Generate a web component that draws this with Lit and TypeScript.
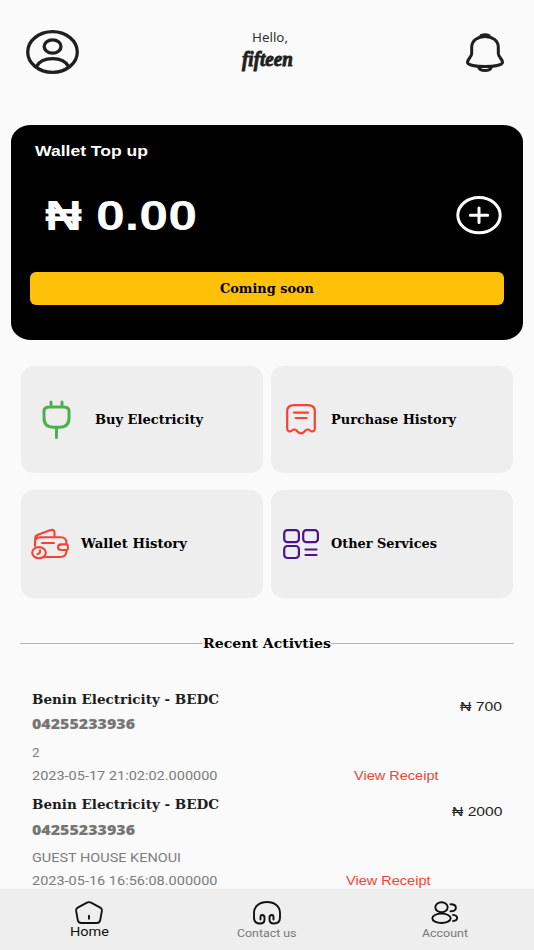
import { LitElement, html, svg, css } from "lit";
import { customElement, property } from "lit/decorators.js";

/** One line of text fitted to a given width; the baseline sits 5px above the bottom of the line box. */
@customElement("fit-text")
class FitText extends LitElement {
  @property() text = "";
  @property({ type: Number }) w = 0;
  @property({ type: Number }) h = 20;
  static styles = css`
    :host { display: block; flex: none; }
    svg { display: block; overflow: visible; }
    text { fill: currentColor; white-space: pre; }
  `;
  render() {
    return html`<svg width=${this.w} height=${this.h}>
      <text x="0" y=${this.h - 5} textLength=${this.w} lengthAdjust="spacingAndGlyphs">${this.text}</text>
    </svg>`;
  }
}

const icons = {
  avatar: svg`<ellipse cx="26.5" cy="22" rx="24.8" ry="20.3"/><ellipse cx="26.6" cy="16.5" rx="8.4" ry="6.7"/><path d="M10.5 36.5C13 31.5 19 28.6 26.5 28.6S40 31.5 42.5 36.5"/>`,
  bell: svg`<path d="M19 3.400C11.500 3.400 5.700 8 5.700 14v6.500c0 3.400-4.200 5.500-4.200 8.700 0 5.700 35 5.700 35 0 0-3.200-4.200-5.300-4.200-8.700V14C32.300 8 26.500 3.400 19 3.400z"/><path d="M15 2.600Q19 .8 23 2.600M12.700 34.200c1.500 4.400 11.100 4.400 12.600 0"/>`,
  plus: svg`<ellipse cx="23" cy="19.2" rx="21.2" ry="17.6"/><path d="M14.300 19.200h17.400M23 12v14.600"/>`,
  plug: svg`<path d="M6.500 7h14q5.500 0 5.500 4v7q0 9.200-9.500 9.200h-6Q1 27.200 1 18v-7q0-4 5.500-4zM8 7V2M19 7V2M13.500 27.200V37.500"/>`,
  receipt: svg`<path d="M1.200 24.500V7q0-5.800 7-5.800h13.600q7 0 7 5.800v17.500c0 3-2.600 3.800-4.800 2-1.800-1.600-3.500-1.200-5 .5-2.500 3.100-5.500 3.100-8 0-1.500-1.700-3.200-2.100-5-.5-2.200 1.800-4.800 1-4.800-2zM8 8.700h14M9.700 14h11"/>`,
  wallet: svg`<path d="M4 18V14q0-4.700 5.500-4.700h20q6 0 6 5.500v1.600h-5q-3.500 0-3.500 2.800t3.500 2.800h5v1q0 6-6.500 6H13M4.200 14.500v-4q0-3 3.300-4L19 2.200q4.500-1.300 4.500 2.500v4.300M11 15h12M35.500 16.400q1.300 0 1.300 1.500v2.600q0 1.500-1.300 1.500"/><ellipse cx="8" cy="24.700" rx="6.800" ry="5.600"/><path d="M9 22.300v1.700q0 .8-.8 1.200l-1.700.9"/>`,
  grid: svg`<rect x="1.200" y="1.200" width="14.700" height="12" rx="3.200"/><rect x="20.200" y="1.200" width="14.700" height="12" rx="3.200"/><rect x="1.200" y="17" width="14.700" height="12" rx="3.200"/><path d="M22.500 20.500h11M22.500 26h11"/>`,
  home: svg`<path d="M12 1.600 2.700 6.600Q.8 7.700 1.100 9.900l1.700 9.200q.5 2.900 3.400 2.900h15.600q2.900 0 3.400-2.900l1.700-9.200Q27.200 7.700 25.300 6.600L16 1.600Q14 .6 12 1.600zM14 14.800v3"/>`,
  headset: svg`<path d="M7.500 18.500v-2.300q0-2.200 1.600-2.200 2.400 0 2.400 2.800v1.700q0 4-4.300 4Q1 22.500 1 16.500V12C1 5.500 6.500 1 14 1s13 4.500 13 11v4.500q0 6-6.200 6-4.300 0-4.300-4v-1.700q0-2.800 2.400-2.800 1.600 0 1.600 2.200v2.300"/>`,
  people: svg`<ellipse cx="10.500" cy="6.200" rx="6.200" ry="5"/><ellipse cx="10.500" cy="17.300" rx="9.200" ry="4.700"/><path d="M19.500 3.300c7.200 0 7.200 7 0 7M22 13.900c5.500.8 5.500 5.400 0 6.200"/>`,
};

const icon = (name: keyof typeof icons, w: number, h: number, sw: number) => html`
  <svg class="icon" width=${w} height=${h} viewBox="0 0 ${w} ${h}" stroke-width=${sw}>${icons[name]}</svg>`;

const tiles = [
  { name: "plug", w: 28, h: 39, sw: 3, label: "Buy Electricity", tw: 108, cls: "plug" },
  { name: "receipt", w: 30, h: 30, sw: 2.2, label: "Purchase History", tw: 125, cls: "receipt" },
  { name: "wallet", w: 38, h: 31, sw: 2.1, label: "Wallet History", tw: 106, cls: "wallet" },
  { name: "grid", w: 36, h: 30, sw: 2.2, label: "Other Services", tw: 106, cls: "grid4" },
] as const;

const rows = [
  { note: "2", nw: 7.5, date: "2023-05-17 21:02:02.000000", amount: "₦ 700", aw: 42, right: 32.5, link: 96 },
  { note: "GUEST HOUSE KENOUI", nw: 149, date: "2023-05-16 16:56:08.000000", amount: "₦ 2000", aw: 50.5, right: 31.5, link: 104 },
];

const tabs = [
  { name: "home", w: 28, h: 23, label: "Home", tw: 39, cls: "tab on" },
  { name: "headset", w: 28, h: 23, label: "Contact us", tw: 59.5, cls: "tab" },
  { name: "people", w: 28, h: 23, label: "Account", tw: 46, cls: "tab" },
] as const;

@customElement("app-root")
class AppRoot extends LitElement {
  static styles = css`
    :host { display: flex; flex-direction: column; height: 950px; overflow: hidden; background: #fafafa; color: #000; font: 13.5px Roboto, sans-serif; box-sizing: border-box; }
    * { box-sizing: border-box; }
    .icon { display: block; flex: none; overflow: visible; fill: none; stroke: currentColor; stroke-linecap: round; stroke-linejoin: round; }
    header { height: 125px; flex: none; display: flex; justify-content: space-between; padding: 29.5px 30.5px 0 26px; color: #1f1f1f; }
    header .icon:last-child { margin-top: 3.5px; }
    .greet { display: flex; flex-direction: column; align-items: center; margin-left: -9px; }
    .hello { font: 12.5px "Noto Sans", sans-serif; color: #333; margin-left: 5px; }
    .name { font: italic 700 20.5px "Liberation Serif", serif; margin-top: 4.5px; stroke: currentColor; stroke-width: 0.9px; }
    .slab { font-family: "DejaVu Serif", serif; font-weight: 700; font-size: 12.8px; }
    .card { flex: none; height: 215px; margin: 0 10.8px 0 10.6px; border-radius: 20px / 17px; background: #000; color: #fff; padding: 15.5px 19.2px 0 19.4px; }
    .title { font: 700 15px "Liberation Sans", sans-serif; margin-left: 5px; }
    .money { display: flex; align-items: flex-start; margin-top: 35.5px; padding: 0 2.3px 0 14.8px; height: 76.2px; }
    .money .icon { margin-left: auto; }
    .sum { font: 700 43px "Liberation Sans", sans-serif; margin-top: 4px; }
    .digits { margin-left: 14px; }
    .button { height: 32.5px; border-radius: 6px; background: #ffc107; color: #000; display: flex; justify-content: center; padding-top: 5.5px; }
    .tiles { flex: none; display: grid; grid-template-columns: 1fr 1fr; gap: 17px 7.5px; padding: 25.6px 21px 0; }
    .tile { height: 107.5px; border-radius: 13px / 12px; background: #eee; display: flex; align-items: center; color: #000; }
    .tile fit-text { margin-top: -0.8px; }
    .plug { color: #4caf50; margin: 0 23.8px 0 22.2px; }
    .receipt { color: #f44336; margin: 0 15px 0 15px; }
    .wallet { color: #f44336; margin: 0 11.3px 0 10.4px; }
    .grid4 { color: #4a148c; margin: 0 12px 0 12.2px; }
    .rule { flex: none; display: flex; align-items: center; height: 20px; margin: 36px 19.8px 0 19.7px; }
    .rule i { flex: 1; height: 1.5px; background: #b5b5b5; }
    .rule fit-text { font-size: 13px; margin-top: -0.5px; }
    .list { flex: 1; min-height: 0; overflow: hidden; padding-top: 35px; }
    .row { display: flex; height: 105.3px; justify-content: space-between; padding-left: 31.5px; }
    .row .slab { font-size: 13px; color: #1c1c1c; }
    .num { font: 800 13.3px "Open Sans", sans-serif; color: #757575; margin-top: 5.9px; }
    .meta { font-size: 13px; color: #7c7c7c; margin-top: 7.4px; }
    .meta.date { margin-top: 2.8px; }
    .right { display: flex; flex-direction: column; align-items: flex-end; font: 13px "Liberation Sans", sans-serif; padding-top: 7.2px; color: #222; }
    .link { color: #f44336; margin-top: 49.2px; }
    nav { flex: none; height: 61.5px; background: #eee; display: grid; grid-template-columns: repeat(3, 1fr); padding-top: 12.7px; box-shadow: 0 0 1px #e4e4e4; }
    .tab { display: flex; flex-direction: column; align-items: center; font-size: 11.2px; color: #777; }
    .tab .icon { color: #111; }
    .tab fit-text { margin-top: -6.5px; }
    .tab.on { color: #111; font-size: 12.7px; }
    .tab.on fit-text { margin-top: -7.3px; }
  `;

  render() {
    return html`
      <header>
        ${icon("avatar", 53, 44, 3.3)}
        <div class="greet">
          <fit-text class="hello" text="Hello," w="36" h="17"></fit-text>
          <fit-text class="name" text="fifteen" w="51" h="20"></fit-text>
        </div>
        ${icon("bell", 38, 39, 3)}
      </header>
      <section class="card">
        <fit-text class="title" text="Wallet Top up" w="113" h="20"></fit-text>
        <div class="money">
          <fit-text class="sum" text="₦" w="37" h="35"></fit-text>
          <fit-text class="sum digits" text="0.00" w="101" h="35"></fit-text>
          ${icon("plus", 46, 38.5, 3)}
        </div>
        <div class="button"><fit-text class="slab" text="Coming soon" w="94" h="20"></fit-text></div>
      </section>
      <section class="tiles">
        ${tiles.map((t) => html`<div class="tile">
          <div class=${t.cls}>${icon(t.name, t.w, t.h, t.sw)}</div>
          <fit-text class="slab" text=${t.label} w=${t.tw} h="20"></fit-text>
        </div>`)}
      </section>
      <div class="rule"><i></i><fit-text class="slab" text="Recent Activties" w="128" h="20"></fit-text><i></i></div>
      <section class="list">
        ${rows.map((r) => html`<div class="row">
          <div>
            <fit-text class="slab" text="Benin Electricity - BEDC" w="187" h="20"></fit-text>
            <fit-text class="num" text="04255233936" w="103" h="20"></fit-text>
            <fit-text class="meta" text=${r.note} w=${r.nw} h="20"></fit-text>
            <fit-text class="meta date" text=${r.date} w="185.5" h="20"></fit-text>
          </div>
          <div class="right">
            <fit-text text=${r.amount} w=${r.aw} h="20" style="margin-right:${r.right}px"></fit-text>
            <fit-text class="link" text="View Receipt" w="84.5" h="20" style="margin-right:${r.link}px"></fit-text>
          </div>
        </div>`)}
      </section>
      <nav>
        ${tabs.map((t) => html`<div class=${t.cls}>
          ${icon(t.name, t.w, t.h, 1.9)}
          <fit-text text=${t.label} w=${t.tw} h="24"></fit-text>
        </div>`)}
      </nav>
    `;
  }
}
